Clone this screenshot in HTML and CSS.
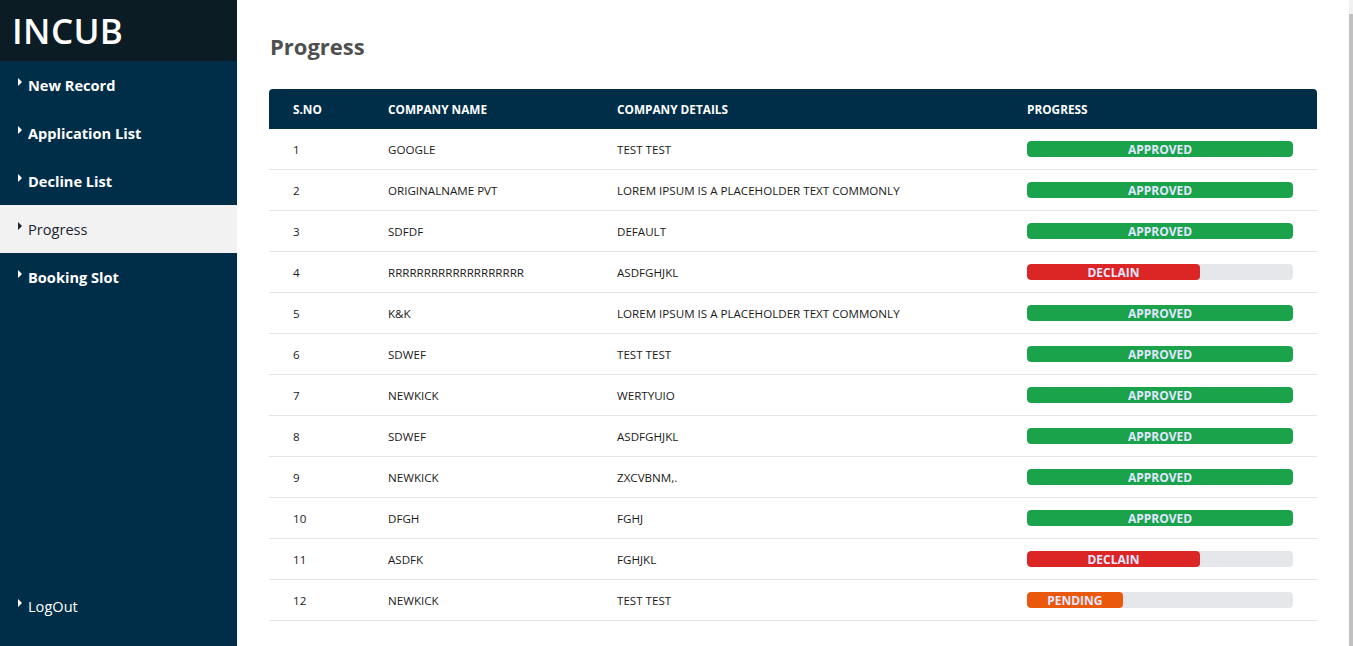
FILE: index.html
```html
<!DOCTYPE html>
<html>
<head>
<meta charset="utf-8">
<title>INCUB - Progress</title>
<link rel="stylesheet" href="styles.css">
</head>
<body>
<div class="app">
  <aside class="sidebar">
    <div class="brand">INCUB</div>
    <nav class="nav">
      <a class="nav-item"><span class="caret"></span>New Record</a>
      <a class="nav-item"><span class="caret"></span>Application List</a>
      <a class="nav-item"><span class="caret"></span>Decline List</a>
      <a class="nav-item active"><span class="caret"></span>Progress</a>
      <a class="nav-item"><span class="caret"></span>Booking Slot</a>
    </nav>
    <a class="nav-item logout"><span class="caret"></span>LogOut</a>
  </aside>
  <main class="main">
    <h1 class="title">Progress</h1>
    <table class="table">
      <colgroup>
        <col class="c1"><col class="c2"><col class="c3"><col class="c4">
      </colgroup>
      <thead>
        <tr><th>S.NO</th><th>COMPANY NAME</th><th>COMPANY DETAILS</th><th>PROGRESS</th></tr>
      </thead>
      <tbody>
        <tr><td>1</td><td>GOOGLE</td><td>TEST TEST</td><td><div class="track"><div class="bar approved" style="width:100%">APPROVED</div></div></td></tr>
        <tr><td>2</td><td>ORIGINALNAME PVT</td><td>LOREM IPSUM IS A PLACEHOLDER TEXT COMMONLY</td><td><div class="track"><div class="bar approved" style="width:100%">APPROVED</div></div></td></tr>
        <tr><td>3</td><td>SDFDF</td><td>DEFAULT</td><td><div class="track"><div class="bar approved" style="width:100%">APPROVED</div></div></td></tr>
        <tr><td>4</td><td>RRRRRRRRRRRRRRRRRRR</td><td>ASDFGHJKL</td><td><div class="track"><div class="bar declain" style="width:65%">DECLAIN</div></div></td></tr>
        <tr><td>5</td><td>K&amp;K</td><td>LOREM IPSUM IS A PLACEHOLDER TEXT COMMONLY</td><td><div class="track"><div class="bar approved" style="width:100%">APPROVED</div></div></td></tr>
        <tr><td>6</td><td>SDWEF</td><td>TEST TEST</td><td><div class="track"><div class="bar approved" style="width:100%">APPROVED</div></div></td></tr>
        <tr><td>7</td><td>NEWKICK</td><td>WERTYUIO</td><td><div class="track"><div class="bar approved" style="width:100%">APPROVED</div></div></td></tr>
        <tr><td>8</td><td>SDWEF</td><td>ASDFGHJKL</td><td><div class="track"><div class="bar approved" style="width:100%">APPROVED</div></div></td></tr>
        <tr><td>9</td><td>NEWKICK</td><td>ZXCVBNM,.</td><td><div class="track"><div class="bar approved" style="width:100%">APPROVED</div></div></td></tr>
        <tr><td>10</td><td>DFGH</td><td>FGHJ</td><td><div class="track"><div class="bar approved" style="width:100%">APPROVED</div></div></td></tr>
        <tr><td>11</td><td>ASDFK</td><td>FGHJKL</td><td><div class="track"><div class="bar declain" style="width:65%">DECLAIN</div></div></td></tr>
        <tr><td>12</td><td>NEWKICK</td><td>TEST TEST</td><td><div class="track"><div class="bar pending" style="width:36%">PENDING</div></div></td></tr>
      </tbody>
    </table>
  </main>
  <div class="scrollbar"><div class="thumb"></div></div>
</div>
</body>
</html>
```

FILE: styles.css
```css
* { box-sizing: border-box; }
html, body { margin: 0; padding: 0; height: 100%; }
body {
  font-family: "Open Sans", "Noto Sans", sans-serif;
  background: #fff;
  color: #222;
  overflow: hidden;
}
.app {
  display: flex;
  height: 646px;
}
.sidebar {
  width: 237px;
  flex: none;
  background: #002e48;
  display: flex;
  flex-direction: column;
}
.brand {
  height: 61px;
  background: #0b1c24;
  color: #fff;
  font-size: 35px;
  font-weight: 600;
  letter-spacing: 0.4px;
  padding-left: 12px;
  line-height: 62px;
}
.nav { flex: 1; display: flex; flex-direction: column; }
.nav-item {
  display: flex;
  align-items: center;
  height: 48px;
  padding-left: 18px;
  color: #fff;
  font-size: 14.6px;
  font-weight: 700;
  cursor: pointer;
}
.nav-item.active {
  background: #f2f2f2;
  color: #1b2630;
  font-weight: 400;
}
.caret {
  width: 0;
  height: 0;
  border-top: 4px solid transparent;
  border-bottom: 4px solid transparent;
  border-left: 4px solid currentColor;
  margin-right: 6px;
  position: relative;
  top: -3px;
}
.logout {
  font-weight: 400;
  margin-bottom: 16px;
}
.main {
  flex: 1;
  padding: 29px 32px 0 32px;
  min-width: 0;
}
.title {
  margin: 0 0 26px 1px;
  font-size: 22px;
  font-weight: 700;
  color: #4f4f4f;
  line-height: 34px;
}
.table {
  width: 1048px;
  border-collapse: separate;
  border-spacing: 0;
  table-layout: fixed;
  font-size: 11.6px;
}
.c1 { width: 95px; }
.c2 { width: 229px; }
.c3 { width: 410px; }
.c4 { width: 314px; }
.table th {
  background: #002e48;
  color: #fff;
  text-align: left;
  font-weight: 700;
  height: 40px;
  padding: 0 24px;
  font-size: 11.8px;
}
.table th:first-child { border-top-left-radius: 4px; }
.table th:last-child { border-top-right-radius: 4px; }
.table td {
  height: 41px;
  padding: 0 24px;
  border-bottom: 1px solid #e5e5e5;
  color: #1a1a1a;
  white-space: nowrap;
}
.track {
  height: 16px;
  background: #e5e7eb;
  border-radius: 4px;
  overflow: hidden;
}
.bar {
  height: 16px;
  border-radius: 4px;
  color: #e0e7ff;
  font-weight: 700;
  font-size: 12px;
  line-height: 18px;
  text-align: center;
}
.approved { background: #1ba34b; }
.declain { background: #dc2626; }
.pending { background: #ea580c; }
.scrollbar {
  width: 4px;
  flex: none;
  background: #f1f1f1;
  padding-top: 14px;
}
.thumb {
  height: 100%;
  background: #c1c1c1;
}
```
